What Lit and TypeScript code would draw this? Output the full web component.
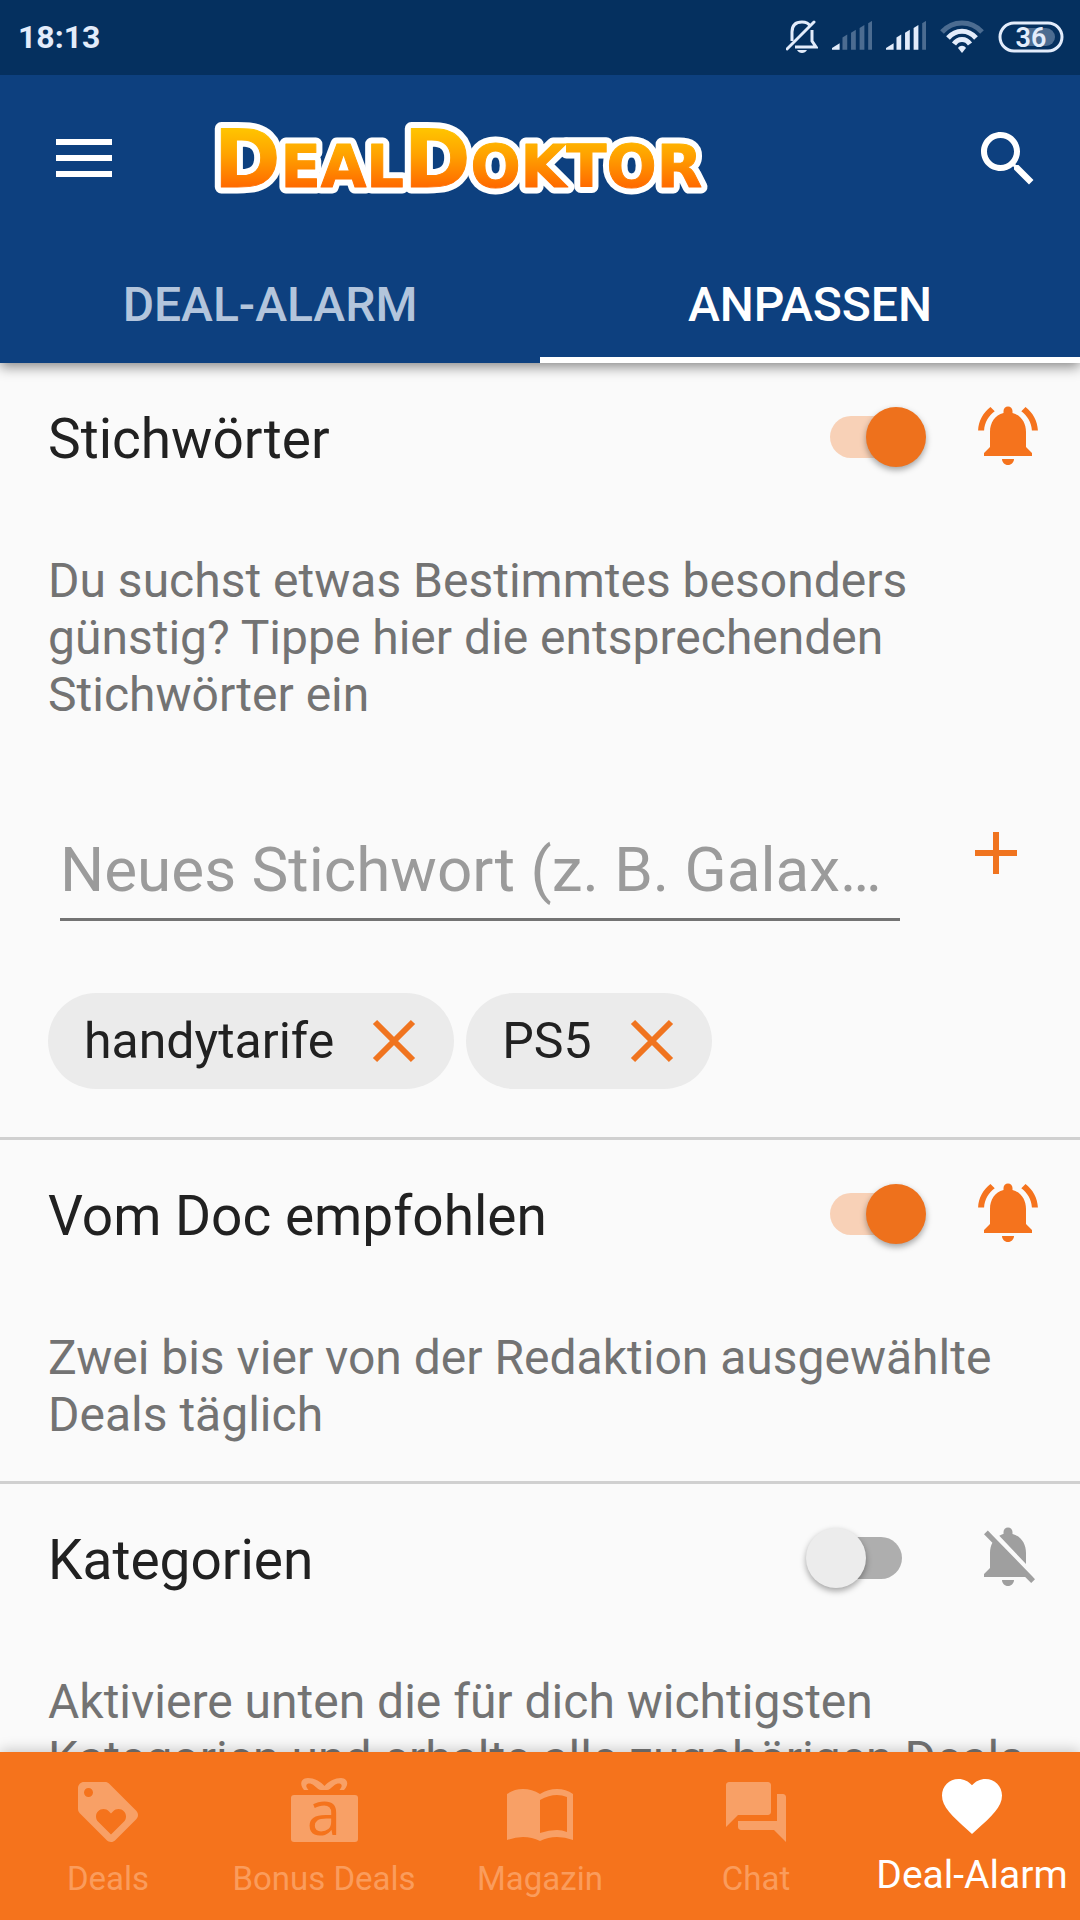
import { LitElement, html, css, svg, nothing } from "lit";
import { customElement, property, state } from "lit/decorators.js";
import { classMap } from "lit/directives/class-map.js";

const bellOn = svg`<path d="M7.58 4.08L6.15 2.65C3.75 4.48 2.17 7.3 2.03 10.5h2c.15-2.65 1.51-4.97 3.55-6.42zm12.39 6.42h2c-.15-3.2-1.73-6.02-4.12-7.85l-1.42 1.43c2.02 1.45 3.39 3.77 3.54 6.42zM18 11c0-3.07-1.64-5.64-4.5-6.32V4c0-.83-.67-1.5-1.5-1.5s-1.5.67-1.5 1.5v.68C7.63 5.36 6 7.92 6 11v5l-2 2v1h16v-1l-2-2v-5zm-6 11c1.1 0 2-.9 2-2h-4c0 1.1.9 2 2 2z"/>`;
const bellOff = svg`<path d="M20 18.69L7.84 6.14 5.27 3.49 4 4.76l2.8 2.8v.01c-.52.99-.8 2.16-.8 3.42v5l-2 2v1h13.73l2 2L21 19.72l-1-1.03zM12 22c1.11 0 2-.89 2-2h-4c0 1.11.89 2 2 2zm6-7.32V11c0-3.08-1.64-5.64-4.5-6.32V4c0-.83-.67-1.5-1.5-1.5s-1.5.67-1.5 1.5v.68c-.25.06-.49.13-.72.23-.23.09-.46.2-.69.32L18 14.68z"/>`;

@customElement("status-bar")
class StatusBar extends LitElement {
  static styles = css`
    :host {
      display: flex;
      align-items: center;
      justify-content: space-between;
      height: 75px;
      padding: 0 16px 2px 18px;
      background: #05305f;
      color: #e3ecfb;
      box-sizing: border-box;
    }
    .time {
      font-size: 32px;
      font-weight: 700;
    }
    .icons {
      display: flex;
      align-items: center;
      gap: 14px;
    }
    svg {
      display: block;
      fill: currentColor;
    }
    .line {
      fill: none;
      stroke: currentColor;
      stroke-width: 3;
    }
    .arc {
      fill: none;
      stroke: currentColor;
      stroke-width: 5;
    }
    .dim {
      opacity: 0.32;
    }
    .charge {
      font: 600 27px Roboto, sans-serif;
    }
  `;

  private signal(level: number) {
    const bars = [0, 1, 2, 3, 4].map((i) => {
      const x = i * 9;
      const top = 22 - i * 5;
      return svg`<path class=${i < level ? "" : "dim"} d=${
        i === 0 ? "M0 29v-2l8-5v7z" : `M${x + 2} 29V${top - 1}l5-3V29z`
      } />`;
    });
    return html`<svg width="40" height="32" viewBox="0 0 42 31" aria-hidden="true">${bars}</svg>`;
  }

  render() {
    return html`
      <span class="time">18:13</span>
      <div class="icons">
        <svg width="32" height="34" viewBox="0 0 32 34" aria-hidden="true">
          <path class="line" d="M6 21V12C6 5 10 2 16 2c4 0 7 2 8 4M26 10v11l4 6H9" />
          <path class="line" d="M1 29L28 2" stroke-linecap="round" />
          <path d="M11 30h10c-1 2-3 3-5 3s-4-1-5-3z" />
        </svg>
        ${this.signal(1)} ${this.signal(4)}
        <svg width="44" height="34" viewBox="0 0 44 34" aria-hidden="true">
          <path class="arc dim" d="M2 12C13 0 31 0 42 12" />
          <path class="arc" d="M8 18C16 9 28 9 36 18" />
          <path class="arc" d="M14 24C18 18 26 18 30 24" />
          <path d="M22 33l-4-5c2-3 6-3 8 0z" />
        </svg>
        <svg width="66" height="32" viewBox="0 0 66 32" role="img" aria-label="Akku 36 %">
          <rect class="line" x="2" y="2" width="62" height="28" rx="14" />
          <path class="dim" d="M28 7h20a9 9 0 0 1 0 18H28z" />
          <text class="charge" x="33" y="26" text-anchor="middle" fill="currentColor">36</text>
        </svg>
      </div>
    `;
  }
}

@customElement("app-toolbar")
class AppToolbar extends LitElement {
  static styles = css`
    :host {
      display: flex;
      align-items: center;
      height: 168px;
      padding: 0 36px 0 48px;
      box-sizing: border-box;
      color: #fff;
    }
    button {
      display: block;
      width: 72px;
      height: 72px;
      padding: 0;
      border: 0;
      background: none;
      color: inherit;
    }
    svg {
      display: block;
      fill: currentColor;
    }
    .logo {
      margin: 0 auto 0 84px;
      overflow: visible;
    }
    .word {
      font-family: "DejaVu Sans", sans-serif;
      font-weight: 700;
      stroke-linejoin: round;
    }
    .outline {
      fill: #fff;
      stroke: #fff;
      stroke-width: 13;
    }
    .face {
      fill: url(#fade);
      stroke: url(#fade);
      stroke-width: 1;
    }
    .big {
      font-size: 80px;
    }
    .small {
      font-size: 59px;
    }
  `;

  render() {
    const word = svg`<tspan class="big">D</tspan><tspan class="small">EAL</tspan><tspan class="big">D</tspan><tspan class="small">OKTOR</tspan>`;
    return html`
      <button aria-label="Menü">
        <svg width="72" height="72" viewBox="0 0 72 72">
          <path d="M8 16h56v6H8zM8 32h56v6H8zM8 48h56v6H8z" />
        </svg>
      </button>
      <svg class="logo" width="516" height="84" viewBox="0 0 516 84" role="img" aria-label="DealDoktor">
        <defs>
          <linearGradient id="fade" gradientUnits="userSpaceOnUse" x1="0" y1="12" x2="0" y2="70">
            <stop offset="0" stop-color="#ffc400" />
            <stop offset="0.45" stop-color="#ffa200" />
            <stop offset="1" stop-color="#ff6a00" />
          </linearGradient>
        </defs>
        <text class="word outline" x="10" y="70" aria-hidden="true">${word}</text>
        <text class="word face" x="10" y="70">${word}</text>
      </svg>
      <button aria-label="Suche">
        <svg width="72" height="72" viewBox="0 0 24 24">
          <path d="M15.5 14h-.79l-.28-.27C15.41 12.59 16 11.11 16 9.5 16 5.91 13.09 3 9.5 3S3 5.91 3 9.5 5.91 16 9.5 16c1.61 0 3.09-.59 4.23-1.57l.27.28v.79l5 4.99L20.49 19l-4.99-5zm-6 0C7.01 14 5 11.99 5 9.5S7.01 5 9.5 5 14 7.01 14 9.5 11.99 14 9.5 14z" />
        </svg>
      </button>
    `;
  }
}

@customElement("alarm-section")
class AlarmSection extends LitElement {
  @property() heading = "";
  @property() text = "";
  @property({ type: Boolean }) on = false;

  static styles = css`
    :host {
      display: block;
      padding-top: 36px;
      border-bottom: 3px solid #d0d0d0;
    }
    .head {
      display: flex;
      align-items: center;
      padding: 0 36px 0 48px;
    }
    .title {
      flex: 1;
      margin: 8px 0 0;
      font-size: 55px;
      line-height: 64px;
      font-weight: 400;
      color: #212121;
    }
    .switch {
      appearance: none;
      display: grid;
      align-items: center;
      width: 120px;
      height: 60px;
      margin: 4px 46px 0 0;
    }
    .switch::before,
    .switch::after {
      content: "";
      grid-area: 1 / 1;
    }
    .switch::before {
      height: 42px;
      margin: 0 24px;
      border-radius: 21px;
      background: #aeaeae;
    }
    .switch::after {
      width: 60px;
      height: 60px;
      border-radius: 50%;
      background: #ececec;
      box-shadow: 0 3px 6px rgba(0, 0, 0, 0.35);
    }
    .switch:checked::before {
      background: #f8d1b7;
    }
    .switch:checked::after {
      justify-self: end;
      background: #ee711c;
    }
    .bell {
      display: block;
      width: 72px;
      height: 72px;
      fill: #9f9f9f;
    }
    .bell.on {
      fill: #f5731d;
    }
    .text {
      margin: 81px 48px 38px;
      font-size: 48px;
      line-height: 57px;
      color: #737373;
    }
  `;

  render() {
    return html`
      <div class="head">
        <h2 class="title">${this.heading}</h2>
        <input
          class="switch"
          type="checkbox"
          role="switch"
          aria-label=${this.heading}
          .checked=${this.on}
          @change=${(e: Event) => (this.on = (e.target as HTMLInputElement).checked)}
        />
        <svg class="bell ${classMap({ on: this.on })}" viewBox="0 0 24 24" aria-hidden="true">
          ${this.on ? bellOn : bellOff}
        </svg>
      </div>
      <p class="text">${this.text}</p>
      <slot></slot>
    `;
  }
}

@customElement("keyword-editor")
class KeywordEditor extends LitElement {
  @state() private words = ["handytarife", "PS5"];

  static styles = css`
    :host {
      display: block;
      padding: 56px 48px 48px;
    }
    .entry {
      display: flex;
      align-items: flex-start;
      gap: 60px;
      padding-left: 12px;
    }
    .field {
      flex: 1;
      min-width: 0;
      height: 96px;
      margin-top: 8px;
      padding: 0 0 4px;
      border: 0;
      border-bottom: 3px solid #737373;
      border-radius: 0;
      outline: 0;
      background: none;
      box-sizing: border-box;
      font-family: inherit;
      font-size: 62px;
      color: #212121;
      text-overflow: ellipsis;
    }
    .field::placeholder {
      color: #9b9b9b;
      opacity: 1;
    }
    button {
      padding: 0;
      border: 0;
      background: none;
    }
    svg {
      display: block;
      fill: none;
      stroke: #f0741f;
      stroke-width: 6;
    }
    .chips {
      display: flex;
      flex-wrap: wrap;
      gap: 12px;
      margin: 72px 0 0;
      padding: 0;
      list-style: none;
    }
    .chip {
      display: flex;
      align-items: center;
      gap: 36px;
      height: 96px;
      padding: 0 36px;
      border-radius: 48px;
      background: #ebebeb;
      font-size: 50px;
      line-height: 57px;
      color: #212121;
    }
  `;

  private add() {
    const field = this.renderRoot.querySelector("input")!;
    const word = field.value.trim();
    if (word) this.words = [...this.words, word];
    field.value = "";
  }

  render() {
    return html`
      <div class="entry">
        <input class="field" type="text" aria-label="Neues Stichwort" placeholder="Neues Stichwort (z. B. Galax…" />
        <button aria-label="Stichwort hinzufügen" @click=${this.add}>
          <svg width="72" height="72" viewBox="0 0 72 72"><path d="M36 15v42M15 36h42" /></svg>
        </button>
      </div>
      <ul class="chips">
        ${this.words.map(
          (word) => html`
            <li class="chip">
              <span>${word}</span>
              <button
                aria-label="${word} entfernen"
                @click=${() => (this.words = this.words.filter((w) => w !== word))}
              >
                <svg width="48" height="48" viewBox="0 0 48 48"><path d="M5 5l38 38M43 5L5 43" /></svg>
              </button>
            </li>
          `
        )}
      </ul>
    `;
  }
}

const navItems = [
  {
    label: "Deals",
    icon: svg`<g transform="scale(3)"><path d="M21.41 11.58l-9-9C12.05 2.22 11.55 2 11 2H4c-1.1 0-2 .9-2 2v7c0 .55.22 1.05.59 1.42l9 9c.36.36.86.58 1.41.58.55 0 1.05-.22 1.41-.59l7-7c.37-.36.59-.86.59-1.41 0-.55-.23-1.06-.59-1.42zM5.5 7C4.67 7 4 6.33 4 5.5S4.67 4 5.5 4 7 4.67 7 5.5 6.33 7 5.5 7zm11.77 8.27L13 19.54l-4.27-4.27C8.28 14.81 8 14.19 8 13.5c0-1.38 1.12-2.5 2.5-2.5.69 0 1.32.28 1.77.74l.73.72.73-.73c.45-.45 1.08-.73 1.77-.73 1.38 0 2.5 1.12 2.5 2.5 0 .69-.28 1.32-.73 1.77z"/></g>`,
  },
  {
    label: "Bonus Deals",
    icon: svg`<rect x="3" y="19" width="67" height="47" rx="3"/><path d="M16 14H20.500C15 8 21 5.500 26 9.500C29 12 31 14 33 14H39C41 14 43 12 46 9.500C51 5.500 57 8 51.500 14H56C62 8 59 2 53 2C46 2 40 6 36.500 10C33 6 27 2 20 2C13 2 11 8 16 14Z"/><text class="glyph" x="36" y="59" text-anchor="middle">a</text>`,
  },
  {
    label: "Magazin",
    icon: svg`<path fill-rule="evenodd" d="M3 18Q10 13 19 13Q28 13 36 18Q44 13 53 13Q62 13 69 18V64Q61 61 53 61Q44 61 36 65Q28 61 19 61Q11 61 3 64ZM36 24V57Q45 54 53 54Q58 54 63 56V21Q58 19 53 19Q45 19 36 24Z"/>`,
  },
  {
    label: "Chat",
    icon: svg`<g transform="scale(3)"><path d="M21 6h-2v9H6v2c0 .55.45 1 1 1h11l4 4V7c0-.55-.45-1-1-1zm-4 6V3c0-.55-.45-1-1-1H3c-.55 0-1 .45-1 1v14l4-4h10c.55 0 1-.45 1-1z"/></g>`,
  },
  {
    label: "Deal-Alarm",
    active: true,
    icon: svg`<g transform="scale(3)"><path d="M12 21.35l-1.45-1.32C5.4 15.36 2 12.28 2 8.5 2 5.42 4.42 3 7.5 3c1.74 0 3.41.81 4.5 2.09C13.09 3.81 14.76 3 16.5 3 19.58 3 22 5.42 22 8.5c0 3.78-3.4 6.86-8.55 11.54L12 21.35z"/></g>`,
  },
];

@customElement("bottom-nav")
class BottomNav extends LitElement {
  static styles = css`
    .bar {
      display: grid;
      grid-template-columns: repeat(5, 1fr);
      height: 168px;
      background: #f5731c;
      box-shadow: 0 -3px 12px rgba(0, 0, 0, 0.18);
    }
    .item {
      display: flex;
      flex-direction: column;
      align-items: center;
      gap: 12px;
      padding-top: 24px;
      font-size: 33px;
      line-height: 38px;
      white-space: nowrap;
      text-decoration: none;
      color: #fa9c5c;
    }
    .item.active {
      padding-top: 18px;
      font-size: 39px;
      line-height: 42px;
      color: #fff;
    }
    svg {
      display: block;
      fill: #f8a066;
    }
    .active svg {
      fill: #fff;
    }
    .glyph {
      font: 500 62px "Open Sans", sans-serif;
      fill: #f5731c;
    }
  `;

  render() {
    return html`
      <nav class="bar">
        ${navItems.map(
          (item) => html`
            <a
              class="item ${classMap({ active: !!item.active })}"
              href="#"
              aria-current=${item.active ? "page" : nothing}
            >
              <svg width="72" height="72" viewBox="0 0 72 72" aria-hidden="true">${item.icon}</svg>
              <span>${item.label}</span>
            </a>
          `
        )}
      </nav>
    `;
  }
}

@customElement("app-root")
class AppRoot extends LitElement {
  @state() private tab = "ANPASSEN";

  static styles = css`
    :host {
      display: flex;
      flex-direction: column;
      height: 100vh;
      overflow: hidden;
      background: #fafafa;
      font-family: Roboto, "Liberation Sans", sans-serif;
    }
    .header {
      z-index: 1;
      background: #0d407f;
      box-shadow: 0 4px 12px rgba(0, 0, 0, 0.45);
    }
    .tabs {
      display: grid;
      grid-template-columns: 1fr 1fr;
    }
    .tab {
      height: 120px;
      padding: 8px 0 0;
      border: 0;
      border-bottom: 6px solid transparent;
      background: none;
      font: 500 48px Roboto, "Liberation Sans", sans-serif;
      color: #b3c5dc;
    }
    .tab.selected {
      border-color: #fff;
      color: #fff;
    }
    .content {
      flex: 1;
      min-height: 0;
      overflow: auto;
      scrollbar-width: none;
    }
    .nav {
      z-index: 1;
    }
  `;

  render() {
    return html`
      <header class="header">
        <status-bar></status-bar>
        <app-toolbar></app-toolbar>
        <div class="tabs" role="tablist">
          ${["DEAL-ALARM", "ANPASSEN"].map(
            (name) => html`
              <button
                class="tab ${classMap({ selected: this.tab === name })}"
                role="tab"
                aria-selected=${this.tab === name}
                @click=${() => (this.tab = name)}
              >
                ${name}
              </button>
            `
          )}
        </div>
      </header>
      <main class="content">
        <alarm-section
          on
          heading="Stichwörter"
          text="Du suchst etwas Bestimmtes besonders günstig? Tippe hier die entsprechenden Stichwörter ein"
        >
          <keyword-editor></keyword-editor>
        </alarm-section>
        <alarm-section
          on
          heading="Vom Doc empfohlen"
          text="Zwei bis vier von der Redaktion ausgewählte Deals täglich"
        ></alarm-section>
        <alarm-section
          heading="Kategorien"
          text="Aktiviere unten die für dich wichtigsten Kategorien und erhalte alle zugehörigen Deals"
        ></alarm-section>
      </main>
      <bottom-nav class="nav"></bottom-nav>
    `;
  }
}
